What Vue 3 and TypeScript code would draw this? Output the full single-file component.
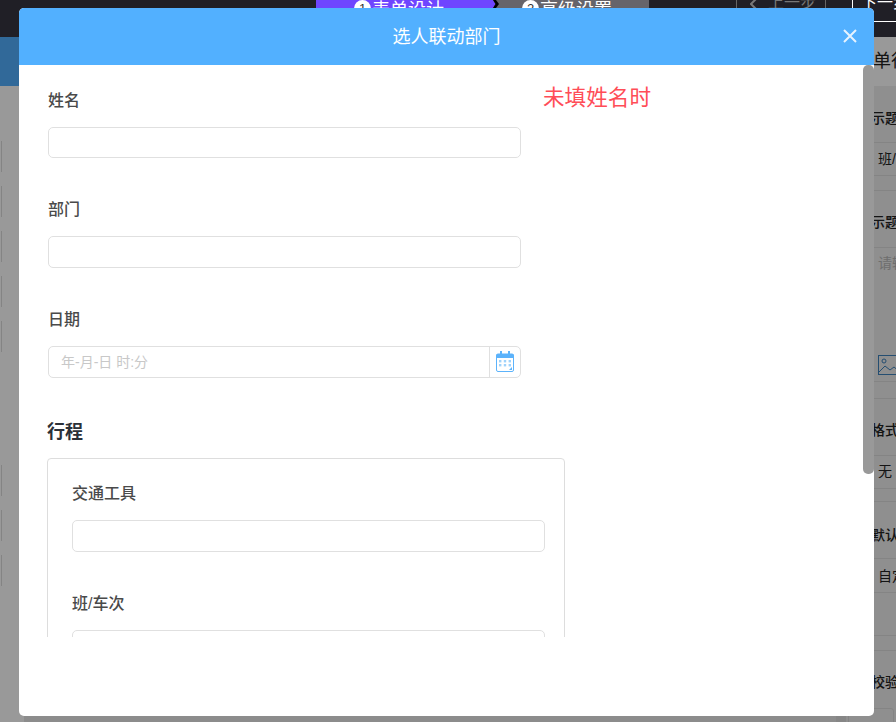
<script setup lang="ts">
interface Field { label: string; placeholder?: string; date?: boolean }
const mainFields: Field[] = [
  { label: '姓名' },
  { label: '部门' },
  { label: '日期', placeholder: '年-月-日 时:分', date: true },
]
const tripFields: Field[] = [{ label: '交通工具' }, { label: '班/车次' }]
const sideLines = [142, 175, 190, 247, 381, 398, 455, 488, 501, 558, 592, 635, 650]
</script>

<template>
  <div class="page">
    <header class="topbar">
      <div class="steps">
        <div class="step step-on"><span class="num">1</span>表单设计</div>
        <svg class="arrow" width="7" height="36" viewBox="0 0 7 36">
          <rect width="7" height="36" fill="#66646a" />
          <polygon points="0,0 1,0 1,10 3.5,14 1,18 1,36 0,36" fill="#6f45ff" />
          <polygon points="1,10 4,10 7,14 4,18 1,18 3.5,14" fill="#000" />
        </svg>
        <div class="step step-off"><span class="num">2</span>高级设置</div>
      </div>
      <div class="actions">
        <div class="act prev">
          <svg class="chev" width="8" height="14" viewBox="0 0 8 14" fill="none" stroke="#777" stroke-width="2">
            <path d="M7 1L1 7l6 6" />
          </svg>
          上一步
        </div>
        <div class="act next">下一步</div>
      </div>
    </header>
    <div class="subbar"></div>

    <aside class="left-tools">
      <i v-for="n in 5" :key="n"></i>
      <b></b>
      <i v-for="n in 3" :key="'x' + n"></i>
    </aside>
    <div class="canvas"></div>
    <div class="gutter"></div>

    <aside class="side">
      <div class="side-head">单行文本</div>
      <span
        v-for="y in sideLines"
        :key="y"
        class="s-line"
        :style="{ top: y - 37 + 'px' }"
      ></span>
      <div class="s-title t1">提示题</div>
      <div class="s-val v1">班/车次</div>
      <div class="s-title t2">提示题</div>
      <div class="s-val v2 muted">请输入</div>
      <svg class="pic" width="22" height="21" viewBox="0 0 22 21" fill="none" stroke="#3f83bd" stroke-width="1">
        <rect x="0.5" y="0.5" width="24" height="19" />
        <circle cx="6" cy="6" r="2" />
        <path d="M1 17l6-6 5 4 4-3 6 5" />
      </svg>
      <div class="s-title t3">格式</div>
      <div class="s-val v3">无</div>
      <div class="s-title t4">默认</div>
      <div class="s-val v4">自定义</div>
      <div class="s-title t5">校验</div>
      <div class="s-box"></div>
    </aside>

    <div class="mask"></div>

    <section class="dialog">
      <div class="dlg-head">
        <h2 class="dlg-title">选人联动部门</h2>
        <svg class="close" width="14" height="14" viewBox="0 0 14 14" fill="none" stroke="#e6f3ff" stroke-width="2">
          <path d="M1 1l12 12M13 1L1 13" />
        </svg>
      </div>
      <div class="dlg-body">
        <div class="scroll">
          <div class="note">未填姓名时</div>
          <div v-for="f in mainFields" :key="f.label" class="field">
            <label class="lbl">{{ f.label }}</label>
            <div class="input">
              <span v-if="f.placeholder" class="ph">{{ f.placeholder }}</span>
              <span v-if="f.date" class="cal">
                <svg width="18" height="21" viewBox="0 0 18 21">
                  <rect x="0.5" y="3" width="17" height="17.5" rx="1.5" fill="#fff" stroke="#5cb3fb" />
                  <path d="M0 4.5A1.5 1.5 0 0 1 1.5 3H16.5A1.5 1.5 0 0 1 18 4.5V7H0z" fill="#5cb3fb" />
                  <rect x="4" y="0" width="2" height="5" fill="#5cb3fb" />
                  <rect x="12" y="0" width="2" height="5" fill="#5cb3fb" />
                  <g fill="#9fd2fb">
                    <rect x="3" y="9" width="2.4" height="2.4" />
                    <rect x="7.8" y="9" width="2.4" height="2.4" />
                    <rect x="12.6" y="9" width="2.4" height="2.4" />
                    <rect x="3" y="13" width="2.4" height="2.4" />
                    <rect x="7.8" y="13" width="2.4" height="2.4" />
                    <rect x="12.6" y="13" width="2.4" height="2.4" />
                  </g>
                  <path d="M13 19l3-3v3z" fill="#5cb3fb" />
                </svg>
              </span>
            </div>
          </div>
          <h3 class="group">行程</h3>
          <div class="card">
            <div v-for="f in tripFields" :key="f.label" class="field card-field">
              <label class="lbl">{{ f.label }}</label>
              <div class="input"></div>
            </div>
          </div>
        </div>
        <div class="track"><div class="thumb"></div></div>
      </div>
    </section>
  </div>
</template>

<style>
html, body { margin: 0; padding: 0; overflow: hidden; }
</style>

<style scoped>
.page {
  position: relative;
  width: 896px;
  height: 722px;
  overflow: hidden;
  background: #fff;
  font-family: "Liberation Sans", "Noto Sans CJK SC", sans-serif;
}
.topbar {
  height: 37px;
  background: #201f26;
  position: relative;
  z-index: 2;
}
.steps { position: absolute; left: 316px; top: -10px; display: flex; }
.step {
  height: 36px;
  display: flex;
  align-items: center;
  font-size: 18px;
  color: #fff;
  gap: 1px;
  box-sizing: border-box;
}
.step-on { width: 176px; background: #6f45ff; padding-left: 38px; }
.step-off { width: 150px; background: #66646a; padding-left: 23px; }
.arrow { display: block; flex: none; }
.num {
  width: 17px; height: 17px; border-radius: 50%;
  background: #fff; color: #333; font-size: 13px;
  display: inline-flex; align-items: center; justify-content: center;
}
.actions { position: absolute; left: 736px; top: -9px; display: flex; gap: 26px; }
.act {
  height: 31px; box-sizing: border-box;
  font-size: 16px; line-height: 24px; position: relative; white-space: nowrap;
}
.prev {
  width: 90px; color: #777;
  border-left: 1px solid #666; border-right: 1px solid #666;
  padding-left: 31px;
}
.chev { position: absolute; left: 13px; top: 6px; }
.next {
  width: 100px; color: #fff;
  border-left: 1px solid #fff; border-bottom: 1px solid #fff;
  padding-left: 8px;
}
.subbar { height: 49px; background: #52b0ff; }

.left-tools {
  position: absolute; left: 0; top: 141px; width: 19px;
  display: flex; flex-direction: column; gap: 14px;
}
.left-tools i { display: block; height: 31px; border-right: 1px solid #dcdcdc; width: 1px; }
.left-tools b { display: block; height: 85px; }
.canvas { position: absolute; left: 24px; top: 86px; width: 812px; bottom: 0; background: #e9e9e9; }
.gutter { position: absolute; left: 836px; top: 86px; width: 10px; bottom: 0; background: #e0e0e0; }

.side { position: absolute; left: 846px; top: 37px; width: 250px; height: 685px; background: #eee; color: #333; }
.side-head {
  height: 49px; background: #fff; padding-left: 27px; font-size: 18px; line-height: 48px;
  white-space: nowrap; color: #222;
}
.s-line { position: absolute; left: 0; right: 0; height: 1px; background: #ddd; }
.s-title { position: absolute; left: 25px; font-size: 14px; line-height: 20px; font-weight: 500; color: #222; white-space: nowrap; }
.t1 { top: 71px; left: 11px; }
.t2 { top: 175px; left: 11px; }
.t3 { top: 383px; }
.t4 { top: 488px; }
.t5 { top: 635px; }
.s-val { position: absolute; left: 32px; font-size: 14px; line-height: 20px; color: #222; white-space: nowrap; }
.muted { color: #b8b8b8; }
.v1 { top: 112px; }
.v2 { top: 216px; }
.v3 { top: 424px; }
.v4 { top: 529px; }
.pic { position: absolute; left: 32px; top: 318px; }
.s-box { position: absolute; left: 2px; top: 671px; width: 44px; height: 20px; border: 1px solid #ddd; border-radius: 3px; }

.mask { position: absolute; inset: 0; background: rgba(0, 0, 0, .4); z-index: 1; }

.dialog {
  position: absolute; left: 19px; top: 8px; width: 855px; height: 708px;
  background: #fff; border-radius: 5px; overflow: hidden; z-index: 3;
  display: flex; flex-direction: column;
}
.dlg-head {
  flex: none; height: 57px; background: #52b0ff; position: relative;
  display: flex; align-items: center; justify-content: center;
  padding-bottom: 3px; box-sizing: border-box;
}
.dlg-title { margin: 0; font-size: 18px; font-weight: 400; color: #fff; }
.close { position: absolute; right: 17px; top: 21px; }
.dlg-body { flex: 1; position: relative; min-height: 0; }
.scroll {
  position: relative;
  height: 572px; overflow: hidden; box-sizing: border-box;
  padding: 22.8px 0 0 29px; width: 844px;
}
.note { position: absolute; left: 524px; top: 19px; font-size: 21.6px; line-height: 28px; color: #ff4d57; white-space: nowrap; }
.field { height: 109.6px; width: 473px; }
.lbl { display: block; font-size: 16px; line-height: 24px; font-weight: 500; color: #4a4a4a; padding-top: 1px; margin-bottom: 14px; }
.input {
  height: 31.6px; box-sizing: border-box; border: 1px solid #e0e0e0; border-radius: 5px;
  position: relative; display: flex; align-items: center; background: #fff;
}
.ph { padding-left: 12px; font-size: 14px; line-height: 28px; color: #c8c8c8; }
.cal {
  position: absolute; right: 0; top: 0; bottom: 0; width: 31px; box-sizing: border-box;
  border-left: 1px solid #e0e0e0; display: flex; align-items: center; justify-content: center;
}
.group { margin: 2.4px 0 13px -1px; font-size: 18px; line-height: 26px; font-weight: 700; color: #2b3038; }
.card {
  margin-left: -1px; width: 518px; box-sizing: border-box;
  border: 1px solid #ddd; border-radius: 4px; padding: 22px 19px 0 24px;
}
.card-field { width: auto; height: 110px; }
.card-field .input { height: 32px; }
.track { position: absolute; right: 0; top: 0; bottom: 0; width: 11px; }
.thumb { width: 11px; height: 409px; background: #999; border-radius: 5px; }
</style>
